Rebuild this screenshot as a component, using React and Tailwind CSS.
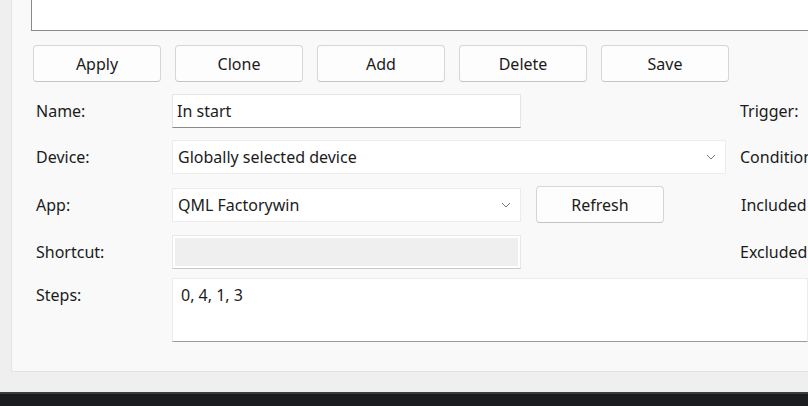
import React from "react";

const Chevron = () => (
  <svg width="10" height="6" viewBox="0 0 10 6" className="shrink-0">
    <path d="M1 1 L5 5 L9 1" fill="none" stroke="#7a7a7a" strokeWidth="1" />
  </svg>
);

const Button = ({ children, className = "" }) => (
  <button
    className={`h-[37px] w-[128px] shrink-0 rounded-[4px] border border-[#d6d6d6] border-b-[#c4c4c4] bg-[#fdfdfd] pt-[1px] text-[16px] text-[#1b1b1b] ${className}`}
  >
    {children}
  </button>
);

const Label = ({ children }) => (
  <div className="w-[136px] shrink-0 text-[16px] text-[#1b1b1b]">{children}</div>
);

const SideLabel = ({ children, className = "" }) => (
  <div className={`shrink-0 whitespace-nowrap text-[16px] text-[#1b1b1b] ${className}`}>{children}</div>
);

export default function App() {
  return (
    <div
      className="flex h-[406px] w-[808px] flex-col overflow-hidden bg-[#efefef]"
      style={{ fontFamily: '"Noto Sans", "Open Sans", sans-serif' }}
    >
      {/* main panel */}
      <div className="ml-[11px] flex h-[372px] shrink-0 flex-col border-b border-l border-[#e3e3e3] bg-[#f9f9f9]">
        {/* description box, cut at top */}
        <div className="ml-[19px] h-[31px] shrink-0 border-b border-l border-[#8a8a8a] bg-white" />

        {/* action buttons */}
        <div className="mt-[14px] flex gap-[14px] pl-[21px]">
          <Button>Apply</Button>
          <Button>Clone</Button>
          <Button>Add</Button>
          <Button>Delete</Button>
          <Button>Save</Button>
        </div>

        {/* form */}
        <div className="mt-[12px] flex flex-col pl-[24px]">
          <div className="flex h-[34px] items-center">
            <Label>Name:</Label>
            <div className="flex h-[34px] w-[349px] shrink-0 items-center border border-[#e5e5e5] border-b-[#8a8a8a] bg-white pl-[4px] text-[16px] text-[#1b1b1b]">
              In start
            </div>
            <SideLabel className="ml-[219px]">Trigger:</SideLabel>
          </div>

          <div className="mt-[12px] flex h-[34px] items-center">
            <Label>Device:</Label>
            <div className="flex h-[34px] w-[554px] shrink-0 items-center justify-between border border-[#ececec] bg-white pl-[5px] pr-[9px] text-[16px] text-[#1b1b1b]">
              <span>Globally selected device</span>
              <Chevron />
            </div>
            <SideLabel className="ml-[14px]">Conditions:</SideLabel>
          </div>

          <div className="mt-[13px] flex h-[35px] items-center">
            <Label>App:</Label>
            <div className="flex h-[34px] w-[349px] shrink-0 items-center justify-between border border-[#ececec] bg-white pl-[5px] pr-[9px] text-[16px] text-[#1b1b1b]">
              <span>QML Factorywin</span>
              <Chevron />
            </div>
            <Button className="ml-[15px] w-[127px]">Refresh</Button>
            <SideLabel className="ml-[77px]">Included apps:</SideLabel>
          </div>

          <div className="mt-[13px] flex h-[34px] items-center">
            <Label>Shortcut:</Label>
            <div className="h-[34px] w-[349px] shrink-0 border border-[#e8e8e8] border-b-[#c8c8c8] bg-white p-[2px]">
              <div className="h-full w-full bg-[#efefef]" />
            </div>
            <SideLabel className="ml-[219px]">Excluded apps:</SideLabel>
          </div>

          <div className="mt-[9px] flex items-start">
            <Label>
              <div className="pt-[5px]">Steps:</div>
            </Label>
            <div className="h-[64px] flex-1 border border-[#ececec] border-b-[#9a9a9a] bg-white pl-[8px] pt-[4px] text-[16px] text-[#1b1b1b]">
              0, 4, 1, 3
            </div>
          </div>
        </div>
      </div>

      {/* taskbar strip */}
      <div className="mt-[20px] flex-1 border-t-[2px] border-[#3a3b3e] bg-[#1b1c1f]" />
    </div>
  );
}
